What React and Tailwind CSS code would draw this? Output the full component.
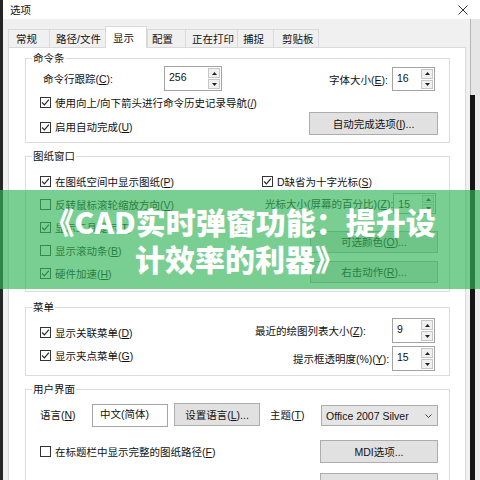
import React from "react";

const U = ({ children }) => (
  <span className="underline decoration-[1px] underline-offset-[1px]">{children}</span>
);

function Box({ checked }) {
  return (
    <svg width="11" height="11" viewBox="0 0 11 11" className="shrink-0">
      <rect x="0.5" y="0.5" width="10" height="10" fill="#fff" stroke="#333" />
      {checked && (
        <path d="M2.1 5.5 L4.4 7.9 L8.9 2.7" fill="none" stroke="#222" strokeWidth="1.1" />
      )}
    </svg>
  );
}

function Check({ checked, children, className = "" }) {
  return (
    <div className={`flex items-center gap-[4px] ${className}`}>
      <Box checked={checked} />
      <span className="whitespace-nowrap">{children}</span>
    </div>
  );
}

function Arrow({ up }) {
  return (
    <svg width="5" height="3" viewBox="0 0 5 3">
      <polygon points={up ? "0,3 2.5,0 5,3" : "0,0 5,0 2.5,3"} fill="#222" />
    </svg>
  );
}

function Spin({ value, className = "" }) {
  return (
    <div className={`flex shrink-0 border border-[#a3a3a3] bg-white ${className}`}>
      <span className="flex-1 pl-[4px] pt-[4px]">{value}</span>
      <div className="flex w-[13px] flex-col gap-[1px] py-[1px] pr-[1px]">
        <span className="flex flex-1 items-center justify-center border border-[#c6c6c6] bg-[#f0f0f0]">
          <Arrow up />
        </span>
        <span className="flex flex-1 items-center justify-center border border-[#c6c6c6] bg-[#f0f0f0]">
          <Arrow />
        </span>
      </div>
    </div>
  );
}

function Btn({ children, className = "" }) {
  return (
    <div
      className={`flex shrink-0 items-center justify-center whitespace-nowrap border border-[#adadad] bg-[#e1e1e1] ${className}`}
    >
      {children}
    </div>
  );
}

function Group({ title, className = "", children }) {
  return (
    <div className={`flex w-[425px] flex-col border border-[#dcdcdc] ${className}`}>
      <div className="-mt-[7px] ml-[6px] h-[12px] w-fit bg-white px-[1px]">{title}</div>
      {children}
    </div>
  );
}

const tabs = [
  { t: "常规", w: "w-[41px] pl-[7px]" },
  { t: "路径/文件", w: "w-[56px] pl-[6px]" },
  { t: "显示", w: "w-[42px] pl-[7px]", on: true },
  { t: "配置", w: "w-[38px] pl-[4px]" },
  { t: "正在打印", w: "w-[52px] pl-[6px]" },
  { t: "捕捉", w: "w-[36px] pl-[5px]" },
  { t: "剪贴板", w: "w-[45px] pl-[8px]" },
];

export default function App() {
  return (
    <div className="relative flex h-[480px] w-[480px] overflow-hidden bg-white font-['Liberation_Sans','Noto_Sans_CJK_SC',sans-serif] text-[10.5px] leading-[12px] text-[#111]">
      <div className="w-[3px] shrink-0 bg-[#262626]" />
      <div className="flex flex-1 flex-col">
        {/* title bar */}
        <div className="flex h-[19px] shrink-0 items-center justify-between pl-[7px] pr-[12px]">
          <span>选项</span>
          <svg width="10" height="10" viewBox="0 0 10 10">
            <path d="M0.5 0.5 L9.5 9.5 M9.5 0.5 L0.5 9.5" stroke="#333" strokeWidth="1" />
          </svg>
        </div>

        <div className="flex flex-1">
          {/* dialog body */}
          <div className="flex w-[467px] shrink-0 flex-col bg-[#f0f0f0] pl-[5px] pr-[4px]">
            <div className="flex h-[28px] shrink-0 items-end">
              {tabs.map((tab) =>
                tab.on ? (
                  <div
                    key={tab.t}
                    className={`relative z-10 -mb-[1px] flex h-[22px] items-center whitespace-nowrap border border-b-0 border-[#d9d9d9] bg-white ${tab.w}`}
                  >
                    {tab.t}
                  </div>
                ) : (
                  <div
                    key={tab.t}
                    className={`flex h-[18px] items-center whitespace-nowrap border-l border-t border-[#dadada] ${tab.w}`}
                  >
                    {tab.t}
                  </div>
                )
              )}
              <div className="h-[18px] border-l border-[#dadada]" />
            </div>

            <div className="flex flex-1 flex-col border border-[#d9d9d9] bg-white pl-[16px]">
              {/* 命令条 */}
              <Group title="命令条" className="mt-[10px] h-[85px]">
                <div className="mt-[2px] flex h-[25px] items-start pl-[17px] pr-[14px]">
                  <span className="w-[121px] whitespace-nowrap pt-[7px]">
                    命令行跟踪(<U>C</U>):
                  </span>
                  <Spin value="256" className="h-[25px] w-[58px]" />
                  <span className="flex-1 whitespace-nowrap pr-[4px] pt-[8px] text-right">
                    字体大小(<U>E</U>):
                  </span>
                  <Spin value="16" className="mt-[1px] h-[24px] w-[43px]" />
                </div>
                <div className="mt-[1px] flex h-[21px] items-center pl-[14px]">
                  <Check checked>
                    使用向上/向下箭头进行命令历史记录导航(<U>/</U>)
                  </Check>
                </div>
                <div className="flex h-[23px] items-start pl-[14px] pr-[11px]">
                  <Check checked className="mt-[8px]">
                    启用自动完成(<U>U</U>)
                  </Check>
                  <Btn className="-mt-[1px] ml-auto h-[23px] w-[129px]">
                    自动完成选项(<U>I</U>)...
                  </Btn>
                </div>
              </Group>

              {/* 图纸窗口 */}
              <Group title="图纸窗口" className="mt-[13px] h-[136px]">
                <div className="mt-[8px] flex">
                  <div className="flex w-[236px] shrink-0 flex-col pl-[14px]">
                    <Check checked className="h-[23px]">
                      在图纸空间中显示图纸(<U>P</U>)
                    </Check>
                    <Check className="h-[23px]">
                      反转鼠标滚轮缩放方向(<U>V</U>)
                    </Check>
                    <Check checked className="h-[23px]">
                      显示工具提示(<U>T</U>)
                    </Check>
                    <Check className="h-[23px]">
                      显示滚动条(<U>B</U>)
                    </Check>
                    <Check checked className="h-[23px]">
                      硬件加速(<U>H</U>)
                    </Check>
                  </div>
                  <div className="flex flex-1 flex-col">
                    <Check checked className="h-[23px] gap-[2px]">
                      D缺省为十字光标(<U>S</U>)
                    </Check>
                    <div className="flex h-[21px] items-center pl-[3px] pr-[14px]">
                      <span className="whitespace-nowrap">
                        光标大小(屏幕的百分比)(<U>Z</U>):
                      </span>
                      <Spin value="15" className="ml-auto h-[21px] w-[43px]" />
                    </div>
                    <Btn className="ml-[48px] mt-[17px] h-[22px] w-[128px]">
                      可选颜色(<U>O</U>)...
                    </Btn>
                    <Btn className="ml-[48px] mt-[8px] h-[22px] w-[128px]">
                      右击动作(<U>R</U>)...
                    </Btn>
                  </div>
                </div>
              </Group>

              {/* 菜单 */}
              <Group title="菜单" className="mt-[15px] h-[69px]">
                <div className="flex">
                  <div className="flex w-[229px] shrink-0 flex-col pl-[14px] pt-[8px]">
                    <Check checked className="h-[23px]">
                      显示关联菜单(<U>D</U>)
                    </Check>
                    <Check checked className="h-[23px]">
                      显示夹点菜单(<U>G</U>)
                    </Check>
                  </div>
                  <div className="flex flex-1 flex-col pr-[14px] pt-[5px]">
                    <div className="flex h-[25px] items-center">
                      <span className="whitespace-nowrap">
                        最近的绘图列表大小(<U>Z</U>):
                      </span>
                      <Spin value="9" className="ml-auto h-[25px] w-[43px]" />
                    </div>
                    <div className="mt-[3px] flex h-[25px] items-center pl-[38px]">
                      <span className="whitespace-nowrap">
                        提示框透明度(%)(<U>Y</U>):
                      </span>
                      <Spin value="15" className="ml-auto h-[25px] w-[43px]" />
                    </div>
                  </div>
                </div>
              </Group>

              {/* 用户界面 */}
              <Group title="用户界面" className="mt-[13px] h-[120px]">
                <div className="mt-[8px] flex h-[24px] items-start pl-[14px]">
                  <span className="w-[52px] shrink-0 whitespace-nowrap pt-[6px]">
                    语言(<U>N</U>)
                  </span>
                  <div className="mt-[1px] h-[23px] w-[76px] shrink-0 whitespace-nowrap border border-[#a5a5a5] bg-white pl-[7px] pt-[3px]">
                    中文(简体)
                  </div>
                  <Btn className="ml-[6px] h-[23px] w-[86px]">
                    设置语言(<U>L</U>)...
                  </Btn>
                  <span className="ml-[10px] w-[51px] shrink-0 whitespace-nowrap pt-[6px]">
                    主题(<U>T</U>)
                  </span>
                  <div className="mt-[2px] flex h-[21px] w-[117px] shrink-0 items-center border border-[#acacac] bg-[#e5e5e5] pl-[4px] pr-[5px]">
                    <span className="whitespace-nowrap">Office 2007 Silver</span>
                    <svg width="7" height="4" viewBox="0 0 7 4" className="ml-auto">
                      <path d="M0.5 0.5 L3.5 3.5 L6.5 0.5" fill="none" stroke="#444" strokeWidth="1" />
                    </svg>
                  </div>
                </div>
                <div className="mt-[13px] flex h-[23px] items-center pl-[14px] pr-[11px]">
                  <Check>
                    在标题栏中显示完整的图纸路径(<U>F</U>)
                  </Check>
                  <Btn className="ml-auto h-[23px] w-[118px]">MDI选项...</Btn>
                </div>
                <div className="mt-[10px] flex h-[23px] pr-[11px]">
                  <Btn className="ml-auto h-[23px] w-[118px]" />
                </div>
              </Group>
            </div>
          </div>

          {/* desktop behind the dialog */}
          <div className="flex flex-1 flex-col">
            <div className="h-[76px] border-l border-[#b5b5b5] bg-[#e6e6e6]" />
            <div className="flex flex-1">
              <div className="w-[5px] bg-[#151515]" />
              <div className="flex-1 bg-[#ebebeb]" />
            </div>
          </div>
        </div>
      </div>

      {/* headline banner */}
      <div className="absolute left-0 top-[190px] flex h-[99px] w-full flex-col items-center justify-center bg-[rgba(52,180,90,0.66)] font-['Noto_Sans_CJK_SC',sans-serif] text-[30px] font-black leading-[37px] text-white">
        <div className="whitespace-nowrap">《CAD实时弹窗功能：提升设</div>
        <div className="whitespace-nowrap">计效率的利器》</div>
      </div>
    </div>
  );
}
